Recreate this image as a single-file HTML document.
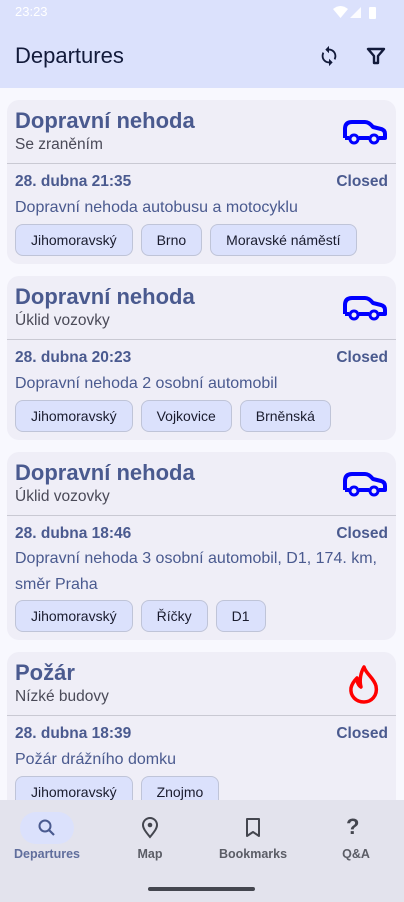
<!DOCTYPE html><html><head><meta charset="utf-8"><style>
*{margin:0;padding:0;box-sizing:border-box}
body{width:404px;height:902px;overflow:hidden;background:#f8f8fe;font-family:"Liberation Sans",sans-serif;position:relative}
.top{position:absolute;left:0;top:0;width:404px;height:88px;background:#dbe1fc}
.card{position:absolute;left:7px;width:389px;background:#efeef7;border-radius:12px}
.t{position:absolute;left:8px;font-size:22px;font-weight:bold;color:#4a5a8f}
.s{position:absolute;left:8px;font-size:15.5px;color:#4a4a58}
.hr{position:absolute;left:0;right:0;height:1px;background:#c9c9d3}
.d{position:absolute;left:8px;font-size:15.5px;font-weight:bold;color:#4a5a8f}
.c{position:absolute;right:8px;font-size:15.5px;font-weight:bold;color:#4a5a8f}
.x{position:absolute;left:8px;font-size:16px;color:#4a5a8f;line-height:26px}
.chips{position:absolute;left:8px;display:flex;gap:8px}
.chip{height:32px;border:1px solid #bfc4d8;background:#dbe1fc;border-radius:8px;font-size:14px;color:#1a1c2e;padding:0 15px;line-height:30px}
.ic{position:absolute;right:8px}
.nav{position:absolute;left:0;top:800px;width:404px;height:102px;background:#e3e3ed}
.ni{position:absolute;top:0;text-align:center;font-size:12.5px;color:#44464f;font-weight:bold;opacity:.85}
</style></head><body>
<div class="top">
<div style="position:absolute;left:15px;top:4px;font-size:13px;color:#fff">23:23</div>
<svg style="position:absolute;left:333px;top:6px" width="45" height="13" viewBox="0 0 45 13"><path d="M0 3 Q7.5 -3 15 3 L7.5 12Z" fill="#fff"/><path d="M17 12 L28 1 L28 12Z" fill="#fff" opacity=".9"/><rect x="36" y="1" width="7" height="12" rx="1" fill="#fff"/></svg>
<div style="position:absolute;left:15px;top:43px;font-size:22px;color:#121a3a">Departures</div>
<svg style="position:absolute;left:318px;top:45px" width="22" height="22" viewBox="0 0 24 24"><path d="M12 4V1L8 5l4 4V6c3.3 0 6 2.7 6 6 0 1-.3 2-.7 2.8l1.5 1.5C19.5 15 20 13.6 20 12c0-4.4-3.6-8-8-8zm0 14c-3.3 0-6-2.7-6-6 0-1 .3-2 .7-2.8L5.2 7.7C4.5 9 4 10.4 4 12c0 4.4 3.6 8 8 8v3l4-4-4-4v3z" fill="#121a3a"/></svg>
<svg style="position:absolute;left:366px;top:46px" width="20" height="20" viewBox="0 0 20 20"><path d="M2 3h16l-6 7v7h-4v-7z" fill="none" stroke="#121a3a" stroke-width="2.4" stroke-linejoin="round"/></svg>
</div>

<div class="card" style="top:100px;height:164px">
<div class="t" style="top:8px">Dopravní nehoda</div><div class="s" style="top:36px">Se zraněním</div>
<svg class="ic" style="top:18px;right:9px" width="45" height="28" viewBox="0 0 45 28"><path d="M3 20V11Q3 4 10 4H23Q27 4 31 9L39 11Q43 12 43 16V20H37M27 20H17M7 20H3" fill="none" stroke="#0000ff" stroke-width="4" stroke-linejoin="round"/><circle cx="12" cy="21" r="4" fill="none" stroke="#0000ff" stroke-width="3"/><circle cx="32" cy="21" r="4" fill="none" stroke="#0000ff" stroke-width="3"/></svg>
<div class="hr" style="top:63px"></div>
<div class="d" style="top:73px">28. dubna 21:35</div><div class="c" style="top:73px">Closed</div>
<div class="x" style="top:95px">Dopravní nehoda autobusu a motocyklu</div>
<div class="chips" style="top:124px"><div class="chip">Jihomoravský</div><div class="chip">Brno</div><div class="chip">Moravské náměstí</div></div>
</div>

<div class="card" style="top:276px;height:164px">
<div class="t" style="top:8px">Dopravní nehoda</div><div class="s" style="top:36px">Úklid vozovky</div>
<svg class="ic" style="top:18px;right:9px" width="45" height="28" viewBox="0 0 45 28"><path d="M3 20V11Q3 4 10 4H23Q27 4 31 9L39 11Q43 12 43 16V20H37M27 20H17M7 20H3" fill="none" stroke="#0000ff" stroke-width="4" stroke-linejoin="round"/><circle cx="12" cy="21" r="4" fill="none" stroke="#0000ff" stroke-width="3"/><circle cx="32" cy="21" r="4" fill="none" stroke="#0000ff" stroke-width="3"/></svg>
<div class="hr" style="top:63px"></div>
<div class="d" style="top:73px">28. dubna 20:23</div><div class="c" style="top:73px">Closed</div>
<div class="x" style="top:95px">Dopravní nehoda 2 osobní automobil</div>
<div class="chips" style="top:124px"><div class="chip">Jihomoravský</div><div class="chip">Vojkovice</div><div class="chip">Brněnská</div></div>
</div>

<div class="card" style="top:452px;height:188px">
<div class="t" style="top:8px">Dopravní nehoda</div><div class="s" style="top:36px">Úklid vozovky</div>
<svg class="ic" style="top:18px;right:9px" width="45" height="28" viewBox="0 0 45 28"><path d="M3 20V11Q3 4 10 4H23Q27 4 31 9L39 11Q43 12 43 16V20H37M27 20H17M7 20H3" fill="none" stroke="#0000ff" stroke-width="4" stroke-linejoin="round"/><circle cx="12" cy="21" r="4" fill="none" stroke="#0000ff" stroke-width="3"/><circle cx="32" cy="21" r="4" fill="none" stroke="#0000ff" stroke-width="3"/></svg>
<div class="hr" style="top:63px"></div>
<div class="d" style="top:73px">28. dubna 18:46</div><div class="c" style="top:73px">Closed</div>
<div class="x" style="top:94px">Dopravní nehoda 3 osobní automobil, D1, 174. km,<br>směr Praha</div>
<div class="chips" style="top:148px"><div class="chip">Jihomoravský</div><div class="chip">Říčky</div><div class="chip">D1</div></div>
</div>

<div class="card" style="top:652px;height:188px">
<div class="t" style="top:8px">Požár</div><div class="s" style="top:36px">Nízké budovy</div>
<svg class="ic" style="top:12px;right:14px" width="36" height="42" viewBox="0 0 36 42"><path d="M18 3C20 10 28 14 30 22C32 32 25 38 18 38C10 38 4 32 5 24C6 19 9 16 11 14C11 19 13 22 15 23C13 16 15 8 18 3Z" fill="none" stroke="#ff0000" stroke-width="3.5" stroke-linejoin="round"/></svg>
<div class="hr" style="top:63px"></div>
<div class="d" style="top:73px">28. dubna 18:39</div><div class="c" style="top:73px">Closed</div>
<div class="x" style="top:95px">Požár drážního domku</div>
<div class="chips" style="top:124px"><div class="chip">Jihomoravský</div><div class="chip">Znojmo</div></div>
</div>

<div class="nav">
<div style="position:absolute;left:20px;top:12px;width:54px;height:32px;border-radius:16px;background:#dbe1fc"></div>
<svg style="position:absolute;left:37px;top:18px" width="20" height="20" viewBox="0 0 20 20"><circle cx="8" cy="8" r="5.5" fill="none" stroke="#4a5a8f" stroke-width="2"/><path d="M12 12l5 5" stroke="#4a5a8f" stroke-width="2.2"/></svg>
<div class="ni" style="left:0;width:94px;top:47px;color:#4a5a8f">Departures</div>
<svg style="position:absolute;left:141px;top:17px" width="18" height="22" viewBox="0 0 18 22"><path d="M9 20C4 14 2 11 2 8a7 7 0 0114 0c0 3-2 6-7 12z" fill="none" stroke="#44464f" stroke-width="2"/><circle cx="9" cy="8" r="2.3" fill="#44464f"/></svg>
<div class="ni" style="left:120px;width:60px;top:47px">Map</div>
<svg style="position:absolute;left:245px;top:17px" width="16" height="22" viewBox="0 0 16 22"><path d="M2 2h12v17l-6-4-6 4z" fill="none" stroke="#44464f" stroke-width="2" stroke-linejoin="round"/></svg>
<div class="ni" style="left:213px;width:80px;top:47px">Bookmarks</div>
<div style="position:absolute;left:346px;top:14px;font-size:22px;font-weight:bold;color:#44464f">?</div>
<div class="ni" style="left:330px;width:52px;top:47px">Q&amp;A</div>
<div style="position:absolute;left:148px;top:87px;width:107px;height:4px;border-radius:2px;background:#44464f"></div>
</div>
</body></html>
